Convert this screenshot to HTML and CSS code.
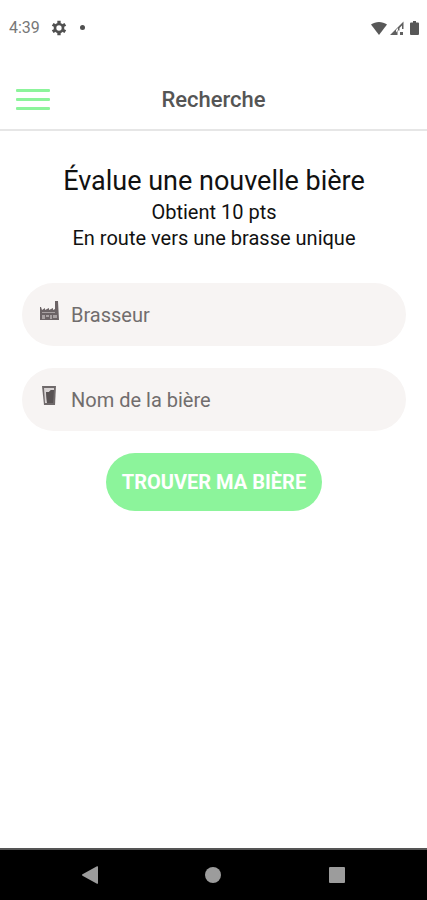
FILE: index.html
```html
<!DOCTYPE html>
<html lang="fr">
<head>
    <meta charset="UTF-8">
    <meta name="viewport" content="width=device-width, initial-scale=1.0">
    <title>Recherche</title>
    <link rel="stylesheet" href="styles.css">
</head>
<body>
    <!-- Phone status bar -->
    <div class="status-bar">
        <div class="status-left">
            <span class="time">4:39</span>
            <svg width="16" height="16" viewBox="0 0 24 24" fill="none" stroke="#505050">
                <circle cx="12" cy="12" r="6" stroke-width="4"/>
                <path d="M12 1v4M12 19v4M2.500 6.500l3.500 2M18 15.500l3.500 2M2.500 17.500l3.500-2M18 8.500l3.500-2" stroke-width="5"/>
            </svg>
            <span class="dot"></span>
        </div>
        <div class="status-right">
            <svg width="16" height="14" viewBox="0 0 16 14" fill="#585858">
                <path d="M0 3.500C4.500 0 11.500 0 16 3.500L8 14z"/>
            </svg>
            <svg width="14" height="14" viewBox="0 0 14 14" fill="#606060">
                <path d="M0 14L13.500 0.500V8h-1.500V4.500L9.500 7v2.500H7.500V14z"/>
                <path d="M6 11.500V9l2-2v2z" fill="#ffffff"/>
                <path d="M10 11h3v3h-3z"/>
            </svg>
            <svg class="battery" width="9" height="14" viewBox="0 0 9 14" fill="#585858">
                <path d="M3 0h3v1.500h2a1 1 0 0 1 1 1V13a1 1 0 0 1-1 1H1a1 1 0 0 1-1-1V2.500a1 1 0 0 1 1-1h2z"/>
            </svg>
        </div>
    </div>

    <header class="header">
        <button type="button" class="menu-btn" aria-label="Menu">
            <span></span>
            <span></span>
            <span></span>
        </button>
        <h1>Recherche</h1>
    </header>

    <main class="main-container">
        <section class="intro">
            <h2>Évalue une nouvelle bière</h2>
            <p>Obtient 10 pts</p>
            <p>En route vers une brasse unique</p>
        </section>

        <form class="search-form">
            <div class="form-group">
                <label for="brewer" aria-label="Brasseur">
                    <svg width="20" height="20" viewBox="0 0 20 20">
                        <path d="M0 6h1l1 3 3-2v2l4-2v2l4-2v2l2-1V0h3l1 19H0z" fill="#6b6365"/>
                        <path d="M2 11h13v1H2zM2 14h3v4H2zM6 14h3v2H6zM10 14h2v4h-2zM13 14h4v3h-4z" fill="#a8a1a2"/>
                    </svg>
                </label>
                <input type="text" id="brewer" placeholder="Brasseur">
            </div>

            <div class="form-group">
                <label for="beer" aria-label="Nom de la bière">
                    <svg width="20" height="20" viewBox="0 0 20 20">
                        <path d="M2 0h14l-1 19H4z" fill="#6f696a"/>
                        <path d="M4 2h10v2h-3L9 6H6l1 11H5z" fill="#d8d3d3"/>
                        <path d="M6 6h3l2-2h3l-1 13H7z" fill="#585253"/>
                    </svg>
                </label>
                <input type="text" id="beer" placeholder="Nom de la bière">
            </div>

            <button type="submit" class="submit-btn">TROUVER MA BIÈRE</button>
        </form>
    </main>

    <!-- System navigation -->
    <nav class="system-nav">
        <button type="button" aria-label="Retour">
            <svg width="18" height="18" viewBox="0 0 18 18" fill="#9c9c9c">
                <path d="M1.500 8.300L16 0.300q1-.5 1 .7v16q0 1.200-1 .7L1.500 9.700q-1-.7 0-1.400z"/>
            </svg>
        </button>
        <button type="button" aria-label="Accueil">
            <svg width="18" height="18" viewBox="0 0 18 18" fill="#9c9c9c">
                <circle cx="9" cy="9" r="8"/>
            </svg>
        </button>
        <button type="button" aria-label="Applications">
            <svg width="18" height="18" viewBox="0 0 18 18" fill="#9c9c9c">
                <rect x="1" y="1" width="16" height="16" rx="1"/>
            </svg>
        </button>
    </nav>
</body>
</html>
```

FILE: styles.css
```css
:root {
    --primary-color: #8cf49b;
    --field-color: #f7f4f3;
    --text-color: #111111;
    --muted-color: #716d6d;
}

* {
    box-sizing: border-box;
    margin: 0;
    padding: 0;
}

body {
    display: flex;
    flex-direction: column;
    min-height: 100vh;
    font-family: Roboto, sans-serif;
    color: var(--text-color);
    background-color: #ffffff;
}

svg {
    display: block;
}

button {
    border: none;
    background: none;
    font-family: inherit;
    cursor: pointer;
}

/* Status Bar */
.status-bar {
    display: flex;
    justify-content: space-between;
    align-items: center;
    height: 55px;
    padding: 0 8px 0 9px;
}

.status-left {
    display: flex;
    align-items: center;
    gap: 11px;
}

.status-right {
    display: flex;
    align-items: center;
    gap: 3px;
}

.time {
    font-size: 16px;
    color: #777777;
}

.dot {
    width: 5px;
    height: 5px;
    margin-left: 2px;
    border-radius: 50%;
    background-color: #505050;
}

.battery {
    margin-left: 3px;
}

/* Header */
.header {
    display: grid;
    grid-template-columns: 1fr auto 1fr;
    align-items: center;
    height: 62px;
    margin-top: 14px;
    padding: 0 16px;
    border-bottom: 2px solid #e6e6e6;
}

.header h1 {
    font-size: 22px;
    font-weight: 500;
    color: #555555;
}

.menu-btn {
    display: flex;
    flex-direction: column;
    gap: 6px;
    width: 34px;
}

.menu-btn span {
    width: 100%;
    height: 3px;
    border-radius: 1px;
    background-color: var(--primary-color);
}

/* Content */
.main-container {
    flex: 1;
    padding: 32px 21px 32px 22px;
}

.intro {
    text-align: center;
}

.intro h2 {
    font-size: 27px;
    line-height: 36px;
    font-weight: 400;
}

.intro p {
    font-size: 20px;
    line-height: 26px;
}

.search-form {
    display: flex;
    flex-direction: column;
    align-items: center;
    gap: 22px;
    margin-top: 32px;
}

.form-group {
    display: flex;
    align-items: center;
    gap: 11px;
    width: 100%;
    height: 63px;
    padding: 0 18px;
    border-radius: 32px;
    background-color: var(--field-color);
}

.form-group label {
    padding-bottom: 8px;
}

.form-group input {
    flex: 1;
    min-width: 0;
    height: 100%;
    border: none;
    outline: none;
    background: none;
    font-family: inherit;
    font-size: 20px;
    color: var(--text-color);
}

.form-group input::placeholder {
    color: var(--muted-color);
}

.submit-btn {
    height: 58px;
    padding: 0 16px;
    border-radius: 29px;
    background-color: var(--primary-color);
    color: #ffffff;
    font-size: 20px;
    font-weight: 700;
}

/* System Navigation */
.system-nav {
    display: flex;
    justify-content: space-around;
    align-items: center;
    height: 52px;
    padding: 0 28px;
    border-top: 2px solid #555555;
    background-color: #000000;
}
```
